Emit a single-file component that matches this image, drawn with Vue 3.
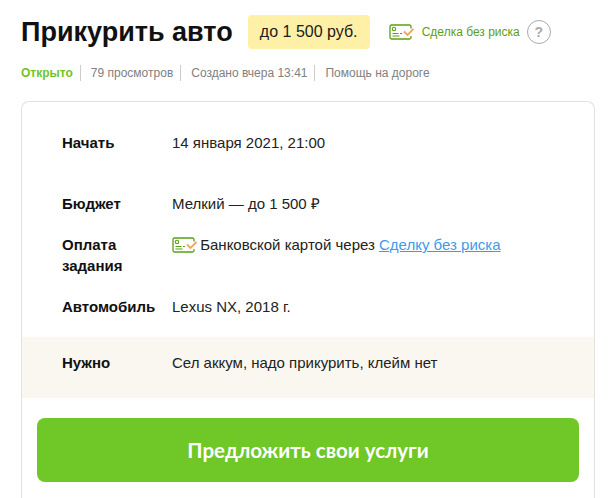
<script setup>
const meta = ['79 просмотров', 'Создано вчера 13:41', 'Помощь на дороге']
</script>

<template>
  <div class="page">
    <header class="head">
      <h1 class="title">Прикурить авто</h1>
      <div class="price">до 1 500 руб.</div>
      <svg class="safe safe-head" width="25" height="16" viewBox="0 0 25 16" fill="none">
        <path d="M22 4.500V2.500A1.500 1.500 0 0 0 20.500 1H2.500A1.500 1.500 0 0 0 1 2.500v11A1.500 1.500 0 0 0 2.500 15h18a1.500 1.500 0 0 0 1.500-1.500V12" stroke="#5c9e14" stroke-width="1.300"/>
        <circle cx="5" cy="5" r="1.700" stroke="#5c9e14" stroke-width="1.100"/>
        <path d="M3.500 9.500h6M11 9.500h2M3.500 12h7" stroke="#5c9e14" stroke-width="1.100"/>
        <path d="M15 7.500l3.500 3.500 6-6" stroke="#f5a35c" stroke-width="1.800"/>
      </svg>
      <span class="safe-text">Сделка без риска</span>
      <span class="help">?</span>
    </header>

    <div class="meta">
      <span class="status">Открыто</span>
      <span v-for="m in meta" :key="m" class="meta-item">{{ m }}</span>
    </div>

    <section class="card">
      <div class="rows">
        <div class="row row-start">
          <div class="label">Начать</div>
          <div class="value">14 января 2021, 21:00</div>
        </div>
        <div class="row">
          <div class="label">Бюджет</div>
          <div class="value">Мелкий — до 1 500 ₽</div>
        </div>
        <div class="row">
          <div class="label">Оплата задания</div>
          <div class="value">
            <svg class="safe safe-row" width="25" height="16" viewBox="0 0 25 16" fill="none">
              <path d="M22 4.500V2.500A1.500 1.500 0 0 0 20.500 1H2.500A1.500 1.500 0 0 0 1 2.500v11A1.500 1.500 0 0 0 2.500 15h18a1.500 1.500 0 0 0 1.500-1.500V12" stroke="#5c9e14" stroke-width="1.300"/>
              <circle cx="5" cy="5" r="1.700" stroke="#5c9e14" stroke-width="1.100"/>
              <path d="M3.500 9.500h6M11 9.500h2M3.500 12h7" stroke="#5c9e14" stroke-width="1.100"/>
              <path d="M15 7.500l3.500 3.500 6-6" stroke="#f5a35c" stroke-width="1.800"/>
            </svg>
            Банковской картой через <a class="link" href="#">Сделку без риска</a>
          </div>
        </div>
        <div class="row">
          <div class="label">Автомобиль</div>
          <div class="value">Lexus NX, 2018 г.</div>
        </div>
      </div>
      <div class="need">
        <div class="label">Нужно</div>
        <div class="value">Сел аккум, надо прикурить, клейм нет</div>
      </div>
      <div class="action">
        <button class="cta">Предложить свои услуги</button>
      </div>
    </section>
  </div>
</template>

<style>
html, body { margin: 0; background: #fff; overflow: hidden; }
</style>

<style scoped>
.page {
  width: 612px;
  height: 498px;
  overflow: hidden;
  box-sizing: border-box;
  padding: 15px 17px 0 21px;
  font-family: "Liberation Sans", Arial, sans-serif;
  color: #1a1a1a;
}
.head { display: flex; align-items: center; height: 34px; }
.title { margin: 0; font-size: 27px; line-height: 33px; font-weight: 700; color: #111; white-space: nowrap; }
.price {
  margin-left: 15px;
  width: 122px;
  height: 34px;
  line-height: 34px;
  text-align: center;
  background: #fff0a8;
  border-radius: 4px;
  font-size: 16px;
}
.safe-head { margin-left: 19px; }
.safe-text { margin-left: 8px; font-size: 12px; color: #5c9e14; }
.help {
  margin-left: 7px;
  width: 22px;
  height: 22px;
  border: 1px solid #aaa;
  border-radius: 50%;
  text-align: center;
  line-height: 22px;
  font-size: 14px;
  font-weight: 700;
  color: #aaa;
}
.meta { display: flex; align-items: center; height: 16px; margin-top: 16px; font-size: 12px; color: #808080; }
.status { font-weight: 700; color: #6fc528; }
.meta-item { margin-left: 7px; padding-left: 10px; border-left: 1px solid #ccc; line-height: 16px; }
.card {
  margin-top: 20px;
  border: 1px solid #e2e2e2;
  border-bottom: 0;
  border-radius: 8px 8px 0 0;
  height: 420px;
  box-sizing: border-box;
}
.rows { padding-top: 30px; }
.row { display: flex; font-size: 15px; line-height: 21px; margin-bottom: 20px; padding-left: 40px; }
.row-start { margin-bottom: 40px; }
.label { width: 110px; flex: none; font-weight: 700; color: #111; }
.value { color: #222; }
.safe-row { vertical-align: -3px; margin-right: -1px; }
.link { color: #3d9be9; text-decoration: underline; }
.need {
  display: flex;
  font-size: 15px;
  line-height: 21px;
  background: #faf7f0;
  height: 61px;
  box-sizing: border-box;
  padding: 15px 0 0 40px;
}
.action { padding: 20px 15px 0; }
.cta {
  display: block;
  width: 100%;
  height: 64px;
  border: 0;
  border-radius: 8px;
  background: #6fc728;
  color: #fff;
  font-family: "Lato", sans-serif;
  font-size: 20.500px;
  font-weight: 700;
}
</style>
